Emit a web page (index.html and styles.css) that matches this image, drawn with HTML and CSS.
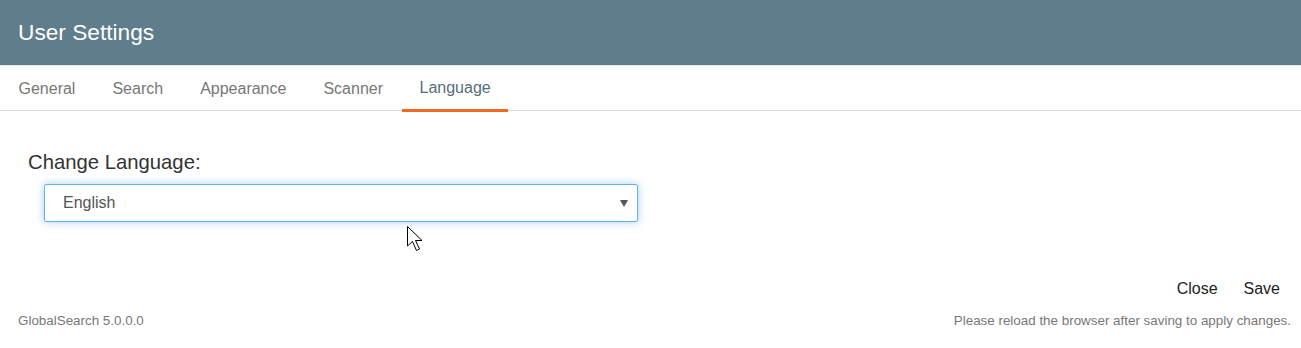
FILE: index.html
```html
<!DOCTYPE html>
<html lang="en">
  <head>
    <meta charset="UTF-8" />
    <meta name="viewport" content="width=device-width, initial-scale=1.0" />
    <title>User Settings</title>
    <link rel="stylesheet" href="styles.css">
  </head>
  <body>
    <div class="modal">
      <div class="modal-header">
        <h1>User Settings</h1>
      </div>

      <ul class="tabs">
        <li>General</li>
        <li>Search</li>
        <li>Appearance</li>
        <li>Scanner</li>
        <li class="active">Language</li>
      </ul>

      <div class="modal-body">
        <label class="field-label" for="language">Change Language:</label>
        <div class="select-wrap">
          <div class="select" id="language">
            <span>English</span>
            <svg class="caret" width="8" height="7" viewBox="0 0 8 7">
              <path d="M0 0 L8 0 L4 7 Z" fill="#555" />
            </svg>
          </div>
          <svg class="cursor" width="22" height="28" viewBox="0 0 22 28">
            <path d="M1.5 1.5 L1.5 21 L6.5 16.5 L10.5 25.5 L13.5 24 L9.5 15.5 L16 15.5 Z" fill="#fff" stroke="#000" stroke-width="1" />
          </svg>
        </div>
      </div>

      <div class="actions">
        <button>Close</button>
        <button>Save</button>
      </div>

      <div class="modal-footer">
        <span>GlobalSearch 5.0.0.0</span>
        <span>Please reload the browser after saving to apply changes.</span>
      </div>
    </div>
  </body>
</html>
```

FILE: styles.css
```css
body {
  margin: 0;
  font-family: "Liberation Sans", Arial, sans-serif;
  background: #fff;
}
.modal {
  width: 1301px;
  height: 348px;
  background: white;
}
.modal-header {
  height: 65px;
  background: #607d8b;
  border-bottom: 1px solid #e3eaed;
  display: flex;
  align-items: center;
  padding: 0 18px;
}
.modal-header h1 {
  margin: 0;
  font-size: 22.7px;
  font-weight: normal;
  color: white;
}
.tabs {
  list-style: none;
  margin: 0;
  padding: 0;
  display: flex;
  height: 44px;
  border-bottom: 1px solid #ddd;
}
.tabs li {
  height: 46px;
  box-sizing: border-box;
  margin-bottom: -2px;
  padding: 2px 18.5px 0;
  display: flex;
  align-items: center;
  font-size: 16px;
  color: #777;
  border-bottom: 3px solid transparent;
}
.tabs li.active {
  color: #546e7a;
  border-bottom-color: #f26722;
  padding: 0 17px 0 18px;
}
.modal-body {
  padding: 39px 0 0 28px;
  height: 115px;
}
.field-label {
  display: block;
  font-size: 20.3px;
  color: #333;
  line-height: 24px;
}
.select-wrap {
  position: relative;
  margin: 10px 0 0 16px;
  width: 594px;
}
.select {
  height: 36px;
  border: 1px solid #66afe9;
  border-radius: 2px;
  box-shadow: 0 0 8px rgba(102, 175, 233, 0.6);
  display: flex;
  align-items: center;
  justify-content: space-between;
  padding: 0 9px 0 18px;
  font-size: 16px;
  color: #555;
}
.caret {
  margin-top: 1px;
}
.cursor {
  position: absolute;
  left: 362px;
  top: 41px;
}
.actions {
  display: flex;
  justify-content: flex-end;
  padding: 7px 8px 0 0;
}
.actions button {
  font-family: inherit;
  font-size: 16px;
  color: #222;
  background: none;
  border: none;
  padding: 8px 13px;
  margin: 0;
}
.modal-footer {
  display: flex;
  justify-content: space-between;
  align-items: flex-end;
  padding: 0 10px 0 18px;
  margin-top: 7px;
  font-size: 13.4px;
  color: #777;
}
```
